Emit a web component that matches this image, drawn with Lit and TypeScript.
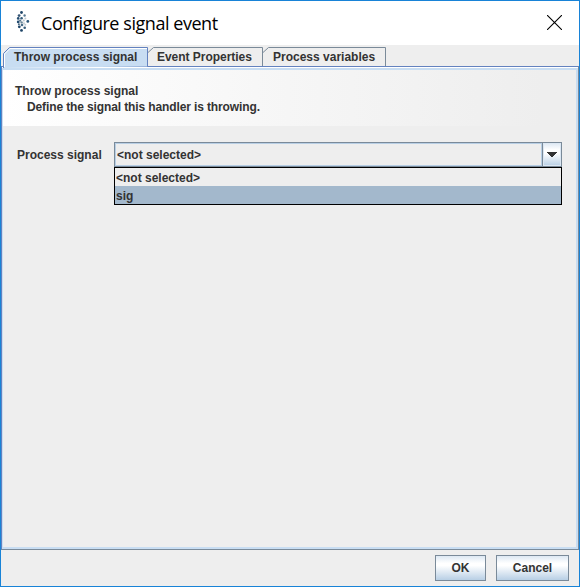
import { LitElement, html, svg, css } from "lit";
import { customElement, property, state } from "lit/decorators.js";
import { classMap } from "lit/directives/class-map.js";

/** Tab with the slanted upper-left corner of the Metal look. */
@customElement("metal-tab")
class MetalTab extends LitElement {
  @property({ type: Number }) width = 100;
  @property({ type: Boolean, reflect: true }) selected = false;

  static styles = css`
    :host { display: block; position: relative; height: 21px; flex: none; }
    svg { display: block; }
    .label {
      position: absolute; left: 10px; top: 3px; line-height: 14px;
      white-space: nowrap;
    }
    :host([selected]) .label { left: 11px; }
    :host(:nth-of-type(2)) .label { left: 9px; letter-spacing: -0.03px; }
  `;

  render() {
    const w = this.width;
    const stroke = this.selected ? "#6382bf" : "#7a8a99";
    const fill = this.selected ? "#c8ddf2" : "#eeeeee";
    return html`<svg width=${w} height="21" viewBox="0 0 ${w} 21">
        ${this.selected
          ? svg`<path d="M.5 21V6.5L6.5 .5H${w - 0.5}V19.5" fill="#c8ddf2" stroke=${stroke} />
              <path d="M1.5 20V7L7 1.5H${w - 1}" fill="none" stroke="#fff" />`
          : svg`<path d="M0 5.5L5.5 .5H${w - 0.5}V19" fill=${fill} stroke=${stroke} />`}
      </svg><span class="label"><slot></slot></span>`;
  }
}

@customElement("app-root")
class AppRoot extends LitElement {
  @state() private hovered = "sig";

  private tabs = [
    { label: "Throw process signal", width: 144 },
    { label: "Event Properties", width: 115 },
    { label: "Process variables", width: 123 },
  ];
  private options = ["<not selected>", "sig"];

  // Logo dots: x, y, radius, colour
  private dots: [number, number, number, string][] = [
    [5.5, 1.5, 1.4, "#1f4568"], [3.1, 4.6, 1.4, "#365575"], [8.6, 4.5, 1.2, "#567890"],
    [5.6, 7.2, 1.3, "#365d7b"], [2.2, 7.4, 1.3, "#244c70"], [9.4, 7.4, 1, "#c3cdd4"],
    [4.2, 9.6, 1.1, "#55748b"], [7.8, 9.6, 1, "#b8c4cc"], [11.8, 10.4, 1.4, "#2d587a"],
    [2.2, 10.9, 1.4, "#244c70"], [5.6, 11.4, 1.2, "#6b8698"], [8, 12.2, 1, "#c3cdd4"],
    [2.9, 13.2, 1, "#486984"], [9.3, 13.8, 1, "#c3cdd4"], [6, 14, 1.3, "#456a86"],
    [3.3, 15.8, 1.4, "#1f4568"], [8.7, 16.7, 1.3, "#365d7b"], [5.5, 19.4, 1.4, "#1f4568"],
  ];

  static styles = css`
    :host {
      display: block;
      font: bold 12px/14px "Liberation Sans", Arial, sans-serif;
      color: #333;
    }
    .window {
      box-sizing: border-box; width: 580px; height: 587px;
      border: 1px solid #1883d7; background: #eee;
      display: flex; flex-direction: column;
    }
    .title {
      height: 44px; background: #fff; display: flex; align-items: flex-start;
      flex: none; padding-left: 15px;
    }
    .logo { margin-top: 10px; flex: none; }
    .caption {
      font: 18px/26px "Open Sans", "Noto Sans", sans-serif; color: #000;
      letter-spacing: -0.45px;
      margin: 9px 0 0 11px; flex: 1; white-space: nowrap;
    }
    .close { margin: 14px 17px 0 0; flex: none; }
    .tabs { display: flex; height: 21px; padding: 2px 0 0 2px; box-sizing: border-box; flex: none; }
    .tabs metal-tab { height: 19px; }
    .pane {
      box-sizing: border-box; height: 484px; flex: none;
      border: 1px solid #7a8a99; border-top-color: #6382bf; border-left-color: #6382bf;
      box-shadow: inset 0 1px #fff;
      padding: 1px 0 0;
    }
    .inner {
      box-sizing: border-box; height: 481px;
      border: 2px solid #c8ddf2; border-left-width: 1px;
    }
    .head {
      box-sizing: border-box; height: 56px; padding: 14px 0 0 12px;
      background: linear-gradient(to right, #fff 0, #eee 94%);
    }
    .head p { margin: 0 0 2px; }
    .head .sub { padding-left: 12px; letter-spacing: -0.12px; }
    .field { display: flex; padding: 16px 14px 0 14px; }
    .field label { width: 97px; padding-top: 6px; flex: none; }
    .combo { position: relative; width: 448px; }
    .value {
      box-sizing: border-box; height: 25px; border: 1px solid #7a8a99; display: flex;
    }
    .text {
      box-sizing: border-box; flex: 1; border: 1px solid #b8cfe5; padding: 4px 0 0 1px;
    }
    .arrow {
      box-sizing: border-box; width: 19px; border-left: 1px solid #7a8a99;
      box-shadow: inset 0 0 0 1px #dbe7f3;
      background: linear-gradient(#dde8f3, #fff 30%, #fff 45%, #b8cfe5);
    }
    .arrow svg { display: block; margin: 9px 0 0 4px; }
    .menu {
      position: absolute; left: 0; top: 25px; width: 448px; box-sizing: border-box;
      border: 1px solid #000; background: #eee;
    }
    .option { height: 15px; padding: 3px 0 0 1px; }
    .option.on { background: #a3b8cc; }
    .footer { display: flex; justify-content: flex-end; gap: 10px; padding: 5px 10px 0 0; }
    .btn {
      box-sizing: border-box; height: 26px; border: 1px solid #7a8a99; padding: 0;
      font: inherit; color: #333; width: 73px;
      background: linear-gradient(#dde8f3, #fff 30%, #fff 40%, #b8cfe5);
    }
    .btn.ok { width: 51px; }
  `;

  render() {
    return html`<div class="window">
      <div class="title">
        <svg class="logo" width="14" height="22" viewBox="0 0 14 22">
          ${this.dots.map(([x, y, r, c]) => svg`<circle cx=${x} cy=${y} r=${r} fill=${c} />`)}
        </svg>
        <span class="caption">Configure signal event</span>
        <svg class="close" width="15" height="15" viewBox="0 0 15 15">
          <path d="M0 0L15 15M15 0L0 15" stroke="#000" stroke-width="1.1" />
        </svg>
      </div>
      <div class="tabs">
        ${this.tabs.map((t, i) => html`<metal-tab .width=${t.width + (i === 0 ? 1 : 0)} ?selected=${i === 0}>${t.label}</metal-tab>`)}
      </div>
      <div class="pane"><div class="inner">
        <div class="head">
          <p>Throw process signal</p>
          <p class="sub">Define the signal this handler is throwing.</p>
        </div>
        <div class="field">
          <label>Process signal</label>
          <div class="combo">
            <div class="value">
              <div class="text">&lt;not selected&gt;</div>
              <div class="arrow"><svg width="10" height="5" viewBox="0 0 10 5" shape-rendering="crispEdges"><path d="M0 0H10V1H9V2H8V3H7V4H6V5H4V4H3V3H2V2H1V1H0Z" fill="#333" /></svg></div>
            </div>
            <div class="menu">
              ${this.options.map((o) => html`<div
                class=${classMap({ option: true, on: o === this.hovered })}
                @mouseenter=${() => (this.hovered = o)}
              >${o}</div>`)}
            </div>
          </div>
        </div>
      </div></div>
      <div class="footer">
        <button class="btn ok">OK</button>
        <button class="btn">Cancel</button>
      </div>
    </div>`;
  }
}
